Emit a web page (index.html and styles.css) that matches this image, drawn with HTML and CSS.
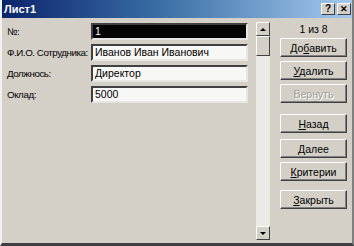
FILE: index.html
```html
<!DOCTYPE html>
<html lang="ru">
<head>
    <meta charset="UTF-8">
    <title>Лист1</title>
    <link rel="stylesheet" href="styles.css">
</head>
<body>
    <div class="window">
        <div class="titlebar">
            <span class="title">Лист1</span>
            <div class="caption-buttons">
                <span class="cap-btn">?</span>
                <span class="cap-btn close">&#x2715;</span>
            </div>
        </div>
        <div class="content">
            <div class="fields">
                <div class="row">
                    <label>№:</label>
                    <div class="field selected">1</div>
                </div>
                <div class="row">
                    <label>Ф.И.О. Сотрудника:</label>
                    <div class="field">Иванов Иван Иванович</div>
                </div>
                <div class="row">
                    <label>Должнось:</label>
                    <div class="field">Директор</div>
                </div>
                <div class="row">
                    <label>Оклад:</label>
                    <div class="field">5000</div>
                </div>
            </div>
            <div class="scrollbar">
                <div class="sb-btn"><span class="arrow up"></span></div>
                <div class="sb-thumb"></div>
                <div class="sb-track"></div>
                <div class="sb-btn"><span class="arrow down"></span></div>
            </div>
            <div class="side">
                <div class="counter">1 из 8</div>
                <button class="btn b-add">До<u>б</u>авить</button>
                <button class="btn b-del"><u>У</u>далить</button>
                <button class="btn b-undo" disabled>Вернуть</button>
                <button class="btn b-prev"><u>Н</u>азад</button>
                <button class="btn b-next"><u>Д</u>алее</button>
                <button class="btn b-crit"><u>К</u>ритерии</button>
                <button class="btn b-close"><u>З</u>акрыть</button>
            </div>
        </div>
    </div>
</body>
</html>
```

FILE: styles.css
```css
body {
    margin: 0;
    padding: 0;
    background: #d4d0c8;
    font-family: "Liberation Sans", Arial, sans-serif;
    font-size: 10.5px;
}
.window {
    width: 354px;
    height: 246px;
    box-sizing: border-box;
    background: #d4d0c8;
    border-left: 2px solid #f2f1ee;
    border-right: 2px solid #808080;
    border-bottom: 3px solid #404040;
    overflow: hidden;
}
.titlebar {
    height: 18px;
    margin: 0 -2px 0 -2px;
    padding: 0 3px 0 4px;
    background: linear-gradient(to right, #0a246a, #3a6ea5 45%, #a6caf0);
    display: flex;
    align-items: center;
    justify-content: space-between;
}
.title {
    color: #fff;
    font-weight: bold;
    font-size: 11px;
}
.caption-buttons {
    display: flex;
    gap: 2px;
}
.cap-btn {
    width: 14px;
    height: 12px;
    box-sizing: border-box;
    background: #d4d0c8;
    border: 1px solid;
    border-color: #fff #404040 #404040 #fff;
    font-size: 10px;
    font-weight: bold;
    line-height: 10px;
    text-align: center;
    color: #000;
}
.cap-btn.close {
    font-size: 9px;
}
.content {
    display: flex;
    padding: 4px 0 0 5px;
}
.fields {
    display: flex;
    flex-direction: column;
    gap: 4px;
    margin-top: 1px;
}
.row {
    display: flex;
    align-items: center;
}
.row label {
    width: 84px;
    color: #000;
    font-size: 9.8px;
    white-space: nowrap;
    letter-spacing: -0.45px;
}
.field {
    width: 157px;
    height: 17px;
    box-sizing: border-box;
    border: 2px solid;
    border-color: #404040 #e8e6e2 #e8e6e2 #404040;
    background: #f7f7f5;
    padding: 0 2px;
    line-height: 13px;
    color: #000;
    white-space: nowrap;
    overflow: hidden;
}
.field.selected {
    background: #050505;
    color: #fff;
}
.scrollbar {
    width: 14px;
    height: 218px;
    margin-left: 8px;
    display: flex;
    flex-direction: column;
}
.sb-btn, .sb-thumb {
    height: 14px;
    box-sizing: border-box;
    background: #d4d0c8;
    border: 1px solid;
    border-color: #fff #404040 #404040 #fff;
    display: flex;
    align-items: center;
    justify-content: center;
}
.sb-thumb {
    height: 20px;
}
.sb-track {
    flex: 1;
    background: #ebeae6;
}
.arrow {
    width: 0;
    height: 0;
    border-left: 3px solid transparent;
    border-right: 3px solid transparent;
}
.arrow.up {
    border-bottom: 3px solid #000;
}
.arrow.down {
    border-top: 3px solid #000;
}
.side {
    display: flex;
    flex-direction: column;
    margin-left: 10px;
    width: 67px;
}
.counter {
    text-align: center;
    height: 16px;
    line-height: 14px;
    color: #000;
}
.btn {
    width: 67px;
    height: 19px;
    box-sizing: border-box;
    padding: 0;
    font-family: "Liberation Sans", Arial, sans-serif;
    font-size: 10.5px;
    color: #000;
    background: #d4d0c8;
    border: 1px solid;
    border-color: #fff #404040 #404040 #fff;
    box-shadow: inset -1px -1px 0 #808080;
}
.btn:disabled {
    color: #a09c94;
    text-shadow: 1px 1px 0 #fff;
}
.b-del, .b-undo {
    margin-top: 4px;
}
.b-prev {
    margin-top: 11px;
}
.b-next {
    margin-top: 6px;
}
.b-crit {
    margin-top: 4px;
}
.b-close {
    margin-top: 9px;
}
```
